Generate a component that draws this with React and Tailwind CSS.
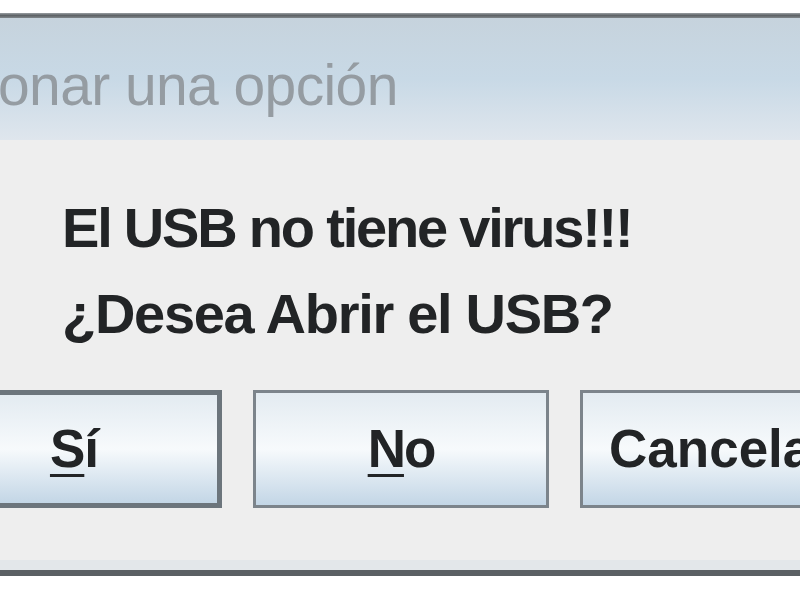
export default function App() {
  const btn =
    'flex h-[118px] w-[296px] shrink-0 items-center justify-center bg-gradient-to-b from-[#e3ebf1] via-[#f7fafc] to-[#c3d6e6] text-[53px] font-bold text-[#222426]';

  return (
    <div className="flex h-[600px] w-[800px] flex-col overflow-hidden bg-white font-['Liberation_Sans',Arial,sans-serif]">
      <div className="h-[13px] shrink-0 bg-white" />
      <div className="h-[5px] shrink-0 bg-gradient-to-b from-[#9a9fa3] via-[#5e6367] to-[#80868a]" />

      {/* title bar */}
      <div className="flex h-[122px] shrink-0 items-center bg-gradient-to-b from-[#c6d3dd] via-[#c8d9e6] to-[#dfe6ed]">
        <span className="-ml-[2px] pt-[14px] text-[57px] font-light tracking-[-0.6px] whitespace-nowrap text-[#959ca2]">
          onar una opción
        </span>
      </div>

      {/* message + options */}
      <div className="flex flex-1 flex-col border-b-[6px] border-[#5b6064] bg-[#eeeeee]">
        <div className="pt-[60px] pl-[62px] text-[56px] leading-[56px] font-bold text-[#222426]">
          <p className="tracking-[-2.2px]">El USB no tiene virus!!!</p>
          <p className="mt-[30px] tracking-[-1.3px]">¿Desea Abrir el USB?</p>
        </div>

        <div className="mt-[48px] -ml-[74px] flex gap-[31px]">
          <button className={btn + ' tracking-[-1px] border-[5px] border-[#6c757c]'}>
            <span className="underline decoration-[3px] underline-offset-[7px]">S</span>í
          </button>
          <button className={btn + ' tracking-[-2px] border-[3px] border-[#7c848b]'}>
            <span className="underline decoration-[3px] underline-offset-[7px]">N</span>o
          </button>
          <button className={btn + ' pr-[14px] tracking-normal border-[3px] border-[#7c848b]'}>Cancelar</button>
        </div>

        <div className="mt-auto h-[10px] bg-[#e3e7ea]" />
      </div>
      <div className="h-[24px] shrink-0 bg-white" />
    </div>
  );
}
